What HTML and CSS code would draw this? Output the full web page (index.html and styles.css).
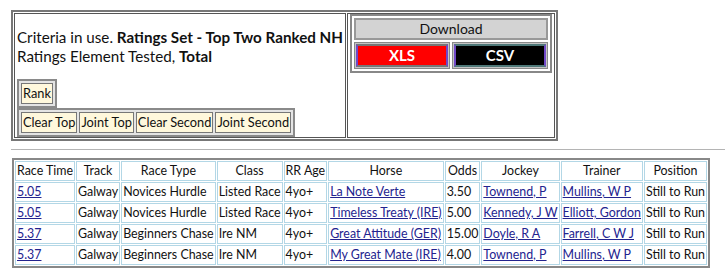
FILE: index.html
```html
<!DOCTYPE html>
<html lang="en">
<head>
  <meta charset="UTF-8" />
  <title>Ratings Criteria</title>
  <link rel="stylesheet" href="styles.css">
</head>
<body>
  <table class="criteria">
    <tr>
      <td class="info">
        <p>Criteria in use. <b>Ratings Set - Top Two Ranked NH</b><br />Ratings Element Tested, <b>Total</b></p>
        <table class="tabs">
          <tr><td>Rank</td></tr>
        </table>
        <table class="tabs">
          <tr>
            <td>Clear Top</td>
            <td>Joint Top</td>
            <td>Clear Second</td>
            <td>Joint Second</td>
          </tr>
        </table>
      </td>
      <td class="export">
        <table class="download">
          <tr><th colspan="2">Download</th></tr>
          <tr>
            <td><span class="btn xls">XLS</span></td>
            <td><span class="btn csv">CSV</span></td>
          </tr>
        </table>
      </td>
    </tr>
  </table>

  <hr />

  <table class="results">
    <tr>
      <th>Race Time</th><th>Track</th><th>Race Type</th><th>Class</th><th>RR Age</th>
      <th>Horse</th><th>Odds</th><th>Jockey</th><th>Trainer</th><th>Position</th>
    </tr>
    <tr>
      <td><a href="#">5.05</a></td><td>Galway</td><td>Novices Hurdle</td><td>Listed Race</td><td>4yo+</td>
      <td><a href="#">La Note Verte</a></td><td>3.50</td><td><a href="#">Townend, P</a></td><td><a href="#">Mullins, W P</a></td><td>Still to Run</td>
    </tr>
    <tr>
      <td><a href="#">5.05</a></td><td>Galway</td><td>Novices Hurdle</td><td>Listed Race</td><td>4yo+</td>
      <td><a href="#">Timeless Treaty (IRE)</a></td><td>5.00</td><td><a href="#">Kennedy, J W</a></td><td><a href="#">Elliott, Gordon</a></td><td>Still to Run</td>
    </tr>
    <tr>
      <td><a href="#">5.37</a></td><td>Galway</td><td>Beginners Chase</td><td>Ire NM</td><td>4yo+</td>
      <td><a href="#">Great Attitude (GER)</a></td><td>15.00</td><td><a href="#">Doyle, R A</a></td><td><a href="#">Farrell, C W J</a></td><td>Still to Run</td>
    </tr>
    <tr>
      <td><a href="#">5.37</a></td><td>Galway</td><td>Beginners Chase</td><td>Ire NM</td><td>4yo+</td>
      <td><a href="#">My Great Mate (IRE)</a></td><td>4.00</td><td><a href="#">Townend, P</a></td><td><a href="#">Mullins, W P</a></td><td>Still to Run</td>
    </tr>
  </table>
</body>
</html>
```

FILE: styles.css
```css
body {
  margin: 10px 0 0 11px;
  font-family: Lato, 'Noto Sans', sans-serif;
  color: #111;
  background: #fff;
}
table { border-collapse: separate; }

/* top block: criteria text + download buttons */
.criteria {
  border: 2px solid #777;
  border-spacing: 1px;
}
.criteria > tbody > tr > td {
  border: 1px solid #555;
  padding: 0 2px;
}
.info { vertical-align: top; }
.info p {
  margin: 14px 0 13px;
  font-size: 15.2px;
  line-height: 19px;
}
.export {
  width: 202px;
  vertical-align: top;
}

.tabs {
  border: 2px solid #8a8a8a;
  border-spacing: 2px;
  background: #e4e4e4;
}
.tabs td {
  border: 1px solid #777;
  background: #fff8dc;
  font-size: 12.8px;
  line-height: 15px;
  padding: 2px 1px;
}

.download {
  width: 100%;
  border: 2px solid #888;
  border-spacing: 2px;
}
.download th {
  background: #d3d3d3;
  border: 2px solid #999;
  font-weight: normal;
  font-size: 14px;
  line-height: 16px;
}
.download td {
  border: 1px solid #888;
  background: #c4c4c4;
  padding: 1px;
  width: 50%;
}
.btn {
  display: block;
  border: 2px solid #777;
  border-left-color: #7048c8;
  border-right-color: #7048c8;
  color: #fff;
  font-weight: bold;
  font-size: 15px;
  line-height: 19px;
  text-align: center;
}
.xls { background: #ff0000; }
.csv {
  background: #000;
  border-top-color: #4e7878;
  border-bottom-color: #4e7878;
}

hr {
  margin: 8px 0 8px;
  border: 0;
  border-top: 1px solid #b4b4b4;
  height: 0;
}

/* results grid */
.results {
  margin-left: 1px;
  border: 2px solid #888;
  border-spacing: 1px;
  font-size: 12.4px;
}
.results th,
.results td {
  border: 1px solid #b3d7e6;
  padding: 1px 1px;
  line-height: 16px;
  white-space: nowrap;
}
.results th {
  font-weight: normal;
  text-align: center;
}
.results td { text-align: left; }
.results a { color: #23238f; }
```
